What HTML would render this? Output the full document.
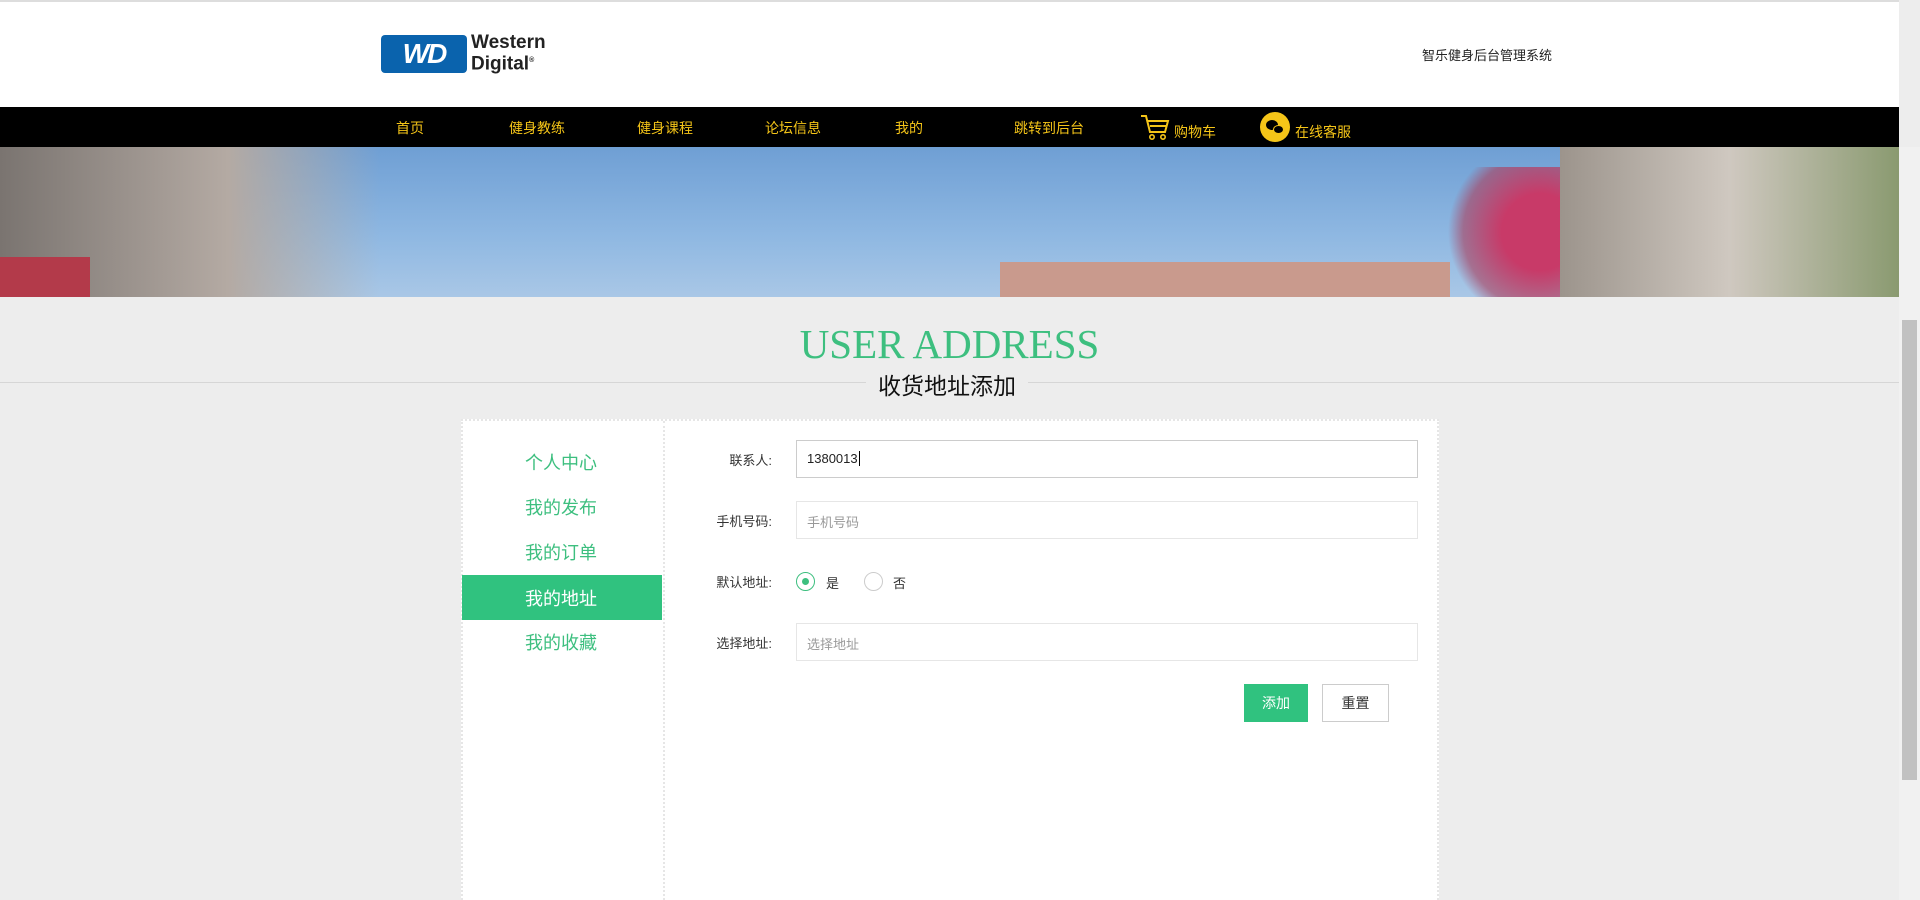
<!DOCTYPE html>
<html style="height:900px;overflow:hidden"><head><meta charset="utf-8"><style>
*{margin:0;padding:0;box-sizing:border-box}
body{width:1920px;height:900px;overflow:hidden;background:#ededed;font-family:"Liberation Sans","Noto Sans CJK SC",sans-serif;position:relative}
.abs{position:absolute}
#hdr{left:0;top:0;width:1899px;height:107px;background:#fff;border-top:2px solid #ddd}
#nav{left:0;top:107px;width:1899px;height:40px;background:#000}
#nav span{position:absolute;top:11px;color:#f5c518;font-size:14px}
#banner{left:0;top:147px;width:1899px;height:150px;background:linear-gradient(180deg,#6f9fd4 0%,#8fb8e2 60%,#a9c7e6 100%);overflow:hidden}
.sb{left:1899px;top:147px;width:21px;height:753px;background:#f1f1f1}
.thumb{left:1902px;top:320px;width:15px;height:460px;background:#c1c1c1}
.menu{position:absolute;left:525px;font-size:18px;color:#3dbf7f}
.lbl{position:absolute;width:100px;left:672px;text-align:right;font-size:13px;color:#333}
.inp{position:absolute;left:796px;width:622px;height:38px;border:1px solid #e6e6e6;background:#fff;font-size:13px;color:#999;padding:10px 0 0 10px}
</style></head><body>
<div id="hdr" class="abs">
 <div class="abs" style="left:381px;top:33px;width:86px;height:38px;background:#0a63ad;border-radius:4px;color:#fff;font:italic bold 28px 'Liberation Sans',sans-serif;text-align:center;line-height:38px;letter-spacing:-2px">WD</div>
 <div class="abs" style="left:471px;top:32px;font:bold 19px/18px 'Liberation Sans',sans-serif;color:#222">Western<br>Digital<sup style="font-size:7px">®</sup></div>
 <div class="abs" style="left:1422px;top:43px;font-size:13px;color:#222">智乐健身后台管理系统</div>
</div>
<div id="nav" class="abs">
 <span style="left:396px">首页</span><span style="left:509px">健身教练</span><span style="left:637px">健身课程</span><span style="left:765px">论坛信息</span><span style="left:895px">我的</span><span style="left:1014px">跳转到后台</span>
 <svg class="abs" style="left:1140px;top:6px" width="30" height="28" viewBox="0 0 30 28"><path d="M1 3h5l4 16h15l3-11H8" fill="none" stroke="#f5c518" stroke-width="2"/><path d="M10 13h16" stroke="#f5c518" stroke-width="2"/><circle cx="12" cy="24" r="2.2" fill="none" stroke="#f5c518" stroke-width="1.6"/><circle cx="23" cy="24" r="2.2" fill="none" stroke="#f5c518" stroke-width="1.6"/></svg>
 <span style="left:1174px;top:15px">购物车</span>
 <div class="abs" style="left:1260px;top:5px;width:30px;height:30px;border-radius:50%;background:#f5c518"><div class="abs" style="left:6px;top:8px;width:12px;height:10px;border-radius:50%;background:#000"></div><div class="abs" style="left:13px;top:13px;width:11px;height:9px;border-radius:50%;background:#000;border:1px solid #f5c518"></div></div>
 <span style="left:1295px;top:15px">在线客服</span>
</div>
<div id="banner" class="abs">
 <div class="abs" style="left:0;top:0;width:380px;height:150px;background:linear-gradient(90deg,#7a7470,#b4aaa3 60%,rgba(180,170,160,0))"></div>
 <div class="abs" style="left:0;top:110px;width:90px;height:40px;background:#b33a4a"></div>
 <div class="abs" style="left:1000px;top:115px;width:450px;height:35px;background:#c99a8d"></div>
 <div class="abs" style="left:1430px;top:20px;width:220px;height:130px;background:radial-gradient(circle,#c83a68 30%,rgba(170,60,90,.6) 60%,rgba(0,0,0,0) 72%)"></div>
 <div class="abs" style="left:1560px;top:0;width:339px;height:150px;background:linear-gradient(90deg,#9c948c,#cfc8c0 50%,#8a9a70)"></div>
</div>
<div class="abs sb"></div><div class="abs thumb"></div>
<div class="abs" style="left:0;top:320px;width:1899px;text-align:center;font:41px 'Liberation Serif',serif;color:#3dbf7f">USER ADDRESS</div>
<div class="abs" style="left:0;top:382px;width:1899px;height:1px;background:#d6d6d6"></div>
<div class="abs" style="left:866px;top:367px;padding:0 12px;background:#ededed;font-size:23px;color:#111">收货地址添加</div>
<div class="abs" style="left:461px;top:419px;width:978px;height:481px;background:#fff;border:2px dotted #e6e6e6;border-bottom:none"></div>
<div class="abs" style="left:663px;top:421px;width:0;height:479px;border-left:2px dotted #e6e6e6"></div>
<div class="menu" style="top:449px">个人中心</div>
<div class="menu" style="top:494px">我的发布</div>
<div class="menu" style="top:539px">我的订单</div>
<div class="abs" style="left:462px;top:575px;width:200px;height:45px;background:#30c27f"></div>
<div class="menu" style="top:585px;color:#fff">我的地址</div>
<div class="menu" style="top:629px">我的收藏</div>
<div class="lbl" style="top:450px">联系人:</div>
<div class="inp" style="top:440px;border-color:#ccc;color:#222">1380013<span style="border-left:1px solid #000;margin-left:1px"></span></div>
<div class="lbl" style="top:511px">手机号码:</div>
<div class="inp" style="top:501px">手机号码</div>
<div class="lbl" style="top:572px">默认地址:</div>
<div class="abs" style="left:796px;top:572px;width:19px;height:19px;border-radius:50%;border:1px solid #3dbf7f"><div class="abs" style="left:5px;top:5px;width:7px;height:7px;border-radius:50%;background:#3dbf7f"></div></div>
<div class="abs" style="left:826px;top:573px;font-size:13px;color:#333">是</div>
<div class="abs" style="left:864px;top:572px;width:19px;height:19px;border-radius:50%;border:1px solid #ccc"></div>
<div class="abs" style="left:893px;top:573px;font-size:13px;color:#333">否</div>
<div class="lbl" style="top:633px">选择地址:</div>
<div class="inp" style="top:623px">选择地址</div>
<div class="abs" style="left:1244px;top:684px;width:64px;height:38px;background:#30c27f;color:#fff;font-size:14px;text-align:center;line-height:38px">添加</div>
<div class="abs" style="left:1322px;top:684px;width:67px;height:38px;background:#fff;border:1px solid #ccc;color:#333;font-size:14px;text-align:center;line-height:36px">重置</div>
</body></html>
